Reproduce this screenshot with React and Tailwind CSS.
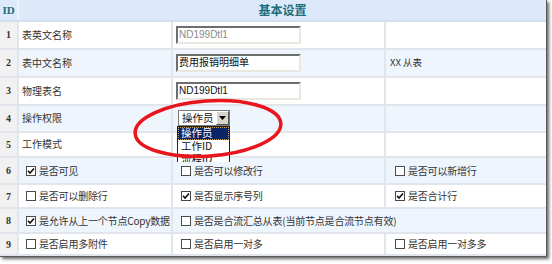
import React from "react";

const CJK = { fontFamily: '"Noto Sans CJK SC", "Noto Sans", sans-serif' };
const ARIAL = { fontFamily: '"Liberation Sans", "Noto Sans CJK SC", sans-serif' };
const SERIF = { fontFamily: '"Liberation Serif", "DejaVu Serif", serif' };

function Box({ checked }) {
  return (
    <span className="inline-flex w-[10px] h-[10px] border border-[#4a4a4a] bg-white items-center justify-center shrink-0">
      {checked && (
        <svg width="8" height="8" viewBox="0 0 8 8">
          <path d="M1 3.8 L3 6 L7 1.5" stroke="#111" strokeWidth="1.6" fill="none" />
        </svg>
      )}
    </span>
  );
}

function Check({ checked, label, pl = "pl-[7px]" }) {
  return (
    <div className={`flex items-center gap-[3px] whitespace-nowrap ${pl}`}>
      <Box checked={checked} />
      <span className="text-[10px] text-[#333] leading-none whitespace-nowrap tracking-[-0.2px]" style={CJK}>{label}</span>
    </div>
  );
}

function Input({ value, gray }) {
  return (
    <div className="ml-[3px] w-[125px] h-[18px] border-2 border-t-[#6e6e6e] border-l-[#6e6e6e] border-r-[#e8e8e0] border-b-[#e8e8e0] bg-white flex items-center pl-[1px]">
      <span className={`text-[10px] leading-none ${gray ? "text-[#8a8a8a]" : "text-[#111]"}`} style={ARIAL}>{value}</span>
    </div>
  );
}

function Row({ h, id, alt, c2, c3, c4, span }) {
  const bg = alt ? "bg-[#eef5fd]" : "bg-white";
  return (
    <div className={`flex border-b-2 border-[#e1e6ec] ${h}`}>
      <div className="w-[19px] shrink-0 border-r-2 border-[#e1e6ec] bg-[#f1f1f1] flex items-center justify-center">
        <span className="text-[10px] font-bold text-[#333]" style={SERIF}>{id}</span>
      </div>
      <div className={`w-[154px] shrink-0 border-r-2 border-[#e1e6ec] ${bg} flex items-center overflow-hidden`}>{c2}</div>
      {span ? (
        <div className={`flex-1 ${bg} flex items-center`}>{c3}</div>
      ) : (
        <>
          <div className={`w-[213px] shrink-0 border-r-2 border-[#e1e6ec] ${bg} flex items-center relative`}>{c3}</div>
          <div className={`flex-1 ${bg} flex items-center`}>{c4}</div>
        </>
      )}
    </div>
  );
}

const Label = ({ t }) => (
  <span className="pl-[3px] text-[10px] text-[#333] leading-none" style={CJK}>{t}</span>
);

function Select() {
  return (
    <div className="relative ml-[5px]">
      <div className="w-[52px] h-[16px] border border-[#7a7a7a] bg-white flex items-center">
        <span className="pl-[3px] text-[10.5px] text-[#111] leading-none flex-1" style={CJK}>操作员</span>
        <div className="w-[13px] h-[14px] bg-[#d8d5ce] border border-t-white border-l-white border-r-[#555] border-b-[#555] flex items-center justify-center">
          <svg width="7" height="4" viewBox="0 0 7 4"><path d="M0 0 H7 L3.5 4 Z" fill="#000" /></svg>
        </div>
      </div>
      <div className="absolute left-[-1px] top-[16px] w-[53px] h-[36px] overflow-hidden border-l border-r border-t border-[#222] bg-white z-10">
        <div className="h-[13px] bg-[#0a246a] flex items-center pl-[2px] border border-dotted border-[#c8a050]">
          <span className="text-[10.5px] text-white leading-none" style={CJK}>操作员</span>
        </div>
        <div className="h-[13px] flex items-center pl-[3px]">
          <span className="text-[10.5px] text-[#111] leading-none" style={CJK}>工作ID</span>
        </div>
        <div className="h-[13px] flex items-center pl-[3px]">
          <span className="text-[10.5px] text-[#111] leading-none" style={CJK}>流程ID</span>
        </div>
      </div>
    </div>
  );
}

export default function App() {
  return (
    <div className="w-[552px] h-[264px] bg-white relative overflow-hidden">
      <div className="w-[547px] h-[257px] flex flex-col border-r border-b border-[#5a5a5a] shadow-[2px_2px_3px_rgba(0,0,0,0.6)] bg-white">
        <div className="flex h-[22px] border-b-2 border-[#d5dfeb] bg-[#dce9fa]">
          <div className="w-[19px] shrink-0 border-r-2 border-[#eef3fb] flex items-center justify-center">
            <span className="text-[11px] font-bold text-[#1b6e7a]" style={SERIF}>ID</span>
          </div>
          <div className="flex-1 flex items-center justify-center">
            <span className="text-[12px] font-bold text-[#1b6e7a] leading-none" style={CJK}>基本设置</span>
          </div>
        </div>
        <Row h="h-[28px]" id="1" c2={<Label t="表英文名称" />} c3={<Input value="ND199Dtl1" gray />} />
        <Row h="h-[28px]" id="2" alt c2={<Label t="表中文名称" />} c3={<Input value="费用报销明细单" />}
          c4={<span className="pl-[4px] text-[9.5px] text-[#333] leading-none" style={CJK}>XX 从表</span>} />
        <Row h="h-[28px]" id="3" c2={<Label t="物理表名" />} c3={<Input value="ND199Dtl1" />} />
        <div className="relative z-10">
          <Row h="h-[27px]" id="4" alt c2={<Label t="操作权限" />} c3={<Select />} />
        </div>
        <Row h="h-[26px]" id="5" c2={<Label t="工作模式" />} />
        <Row h="h-[27px]" id="6" alt
          c2={<Check checked label="是否可见" />}
          c3={<Check label="是否可以修改行" pl="pl-[8px]" />}
          c4={<Check label="是否可以新增行" pl="pl-[9px]" />} />
        <Row h="h-[24px]" id="7"
          c2={<Check label="是否可以删除行" />}
          c3={<Check checked label="是否显示序号列" pl="pl-[8px]" />}
          c4={<Check checked label="是否合计行" pl="pl-[9px]" />} />
        <Row h="h-[25px]" id="8" alt span
          c2={<Check checked label="是允许从上一个节点Copy数据" />}
          c3={<Check label="是否是合流汇总从表(当前节点是合流节点有效)" pl="pl-[8px]" />} />
        <Row h="h-[22px]" id="9"
          c2={<Check label="是否启用多附件" />}
          c3={<Check label="是否启用一对多" pl="pl-[8px]" />}
          c4={<Check label="是否启用一对多多" pl="pl-[9px]" />} />
      </div>
      <svg className="absolute inset-0 pointer-events-none z-20" width="552" height="264" viewBox="0 0 552 264">
        <ellipse cx="208" cy="128.5" rx="73" ry="27.5" transform="rotate(-4 208 128.5)" fill="none" stroke="#e8151c" strokeWidth="3.5" />
      </svg>
    </div>
  );
}
